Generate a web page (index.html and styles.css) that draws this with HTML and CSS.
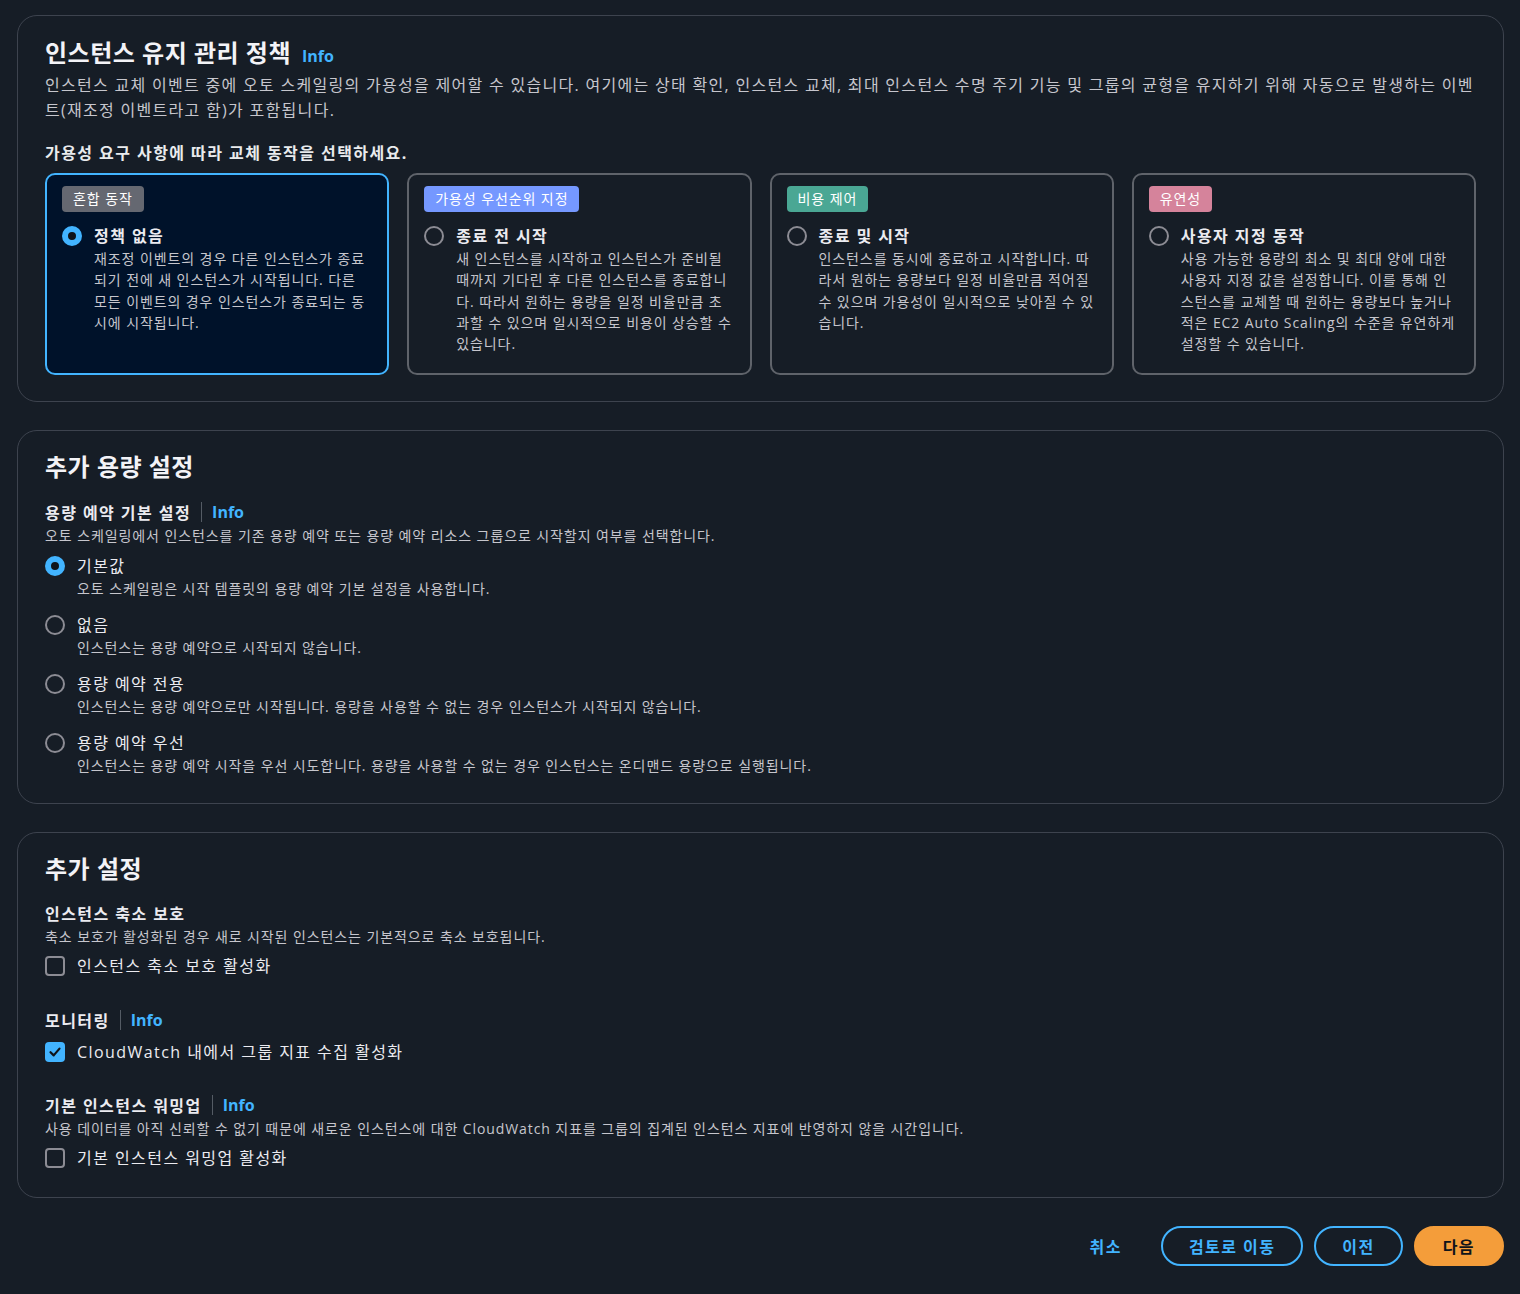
FILE: index.html
```html
<!DOCTYPE html>
<html lang="ko">
<head>
<meta charset="utf-8">
<title>인스턴스 유지 관리 정책</title>
<link rel="stylesheet" href="styles.css">
</head>
<body>
<div class="page">
  <section class="container">
    <div class="head-row">
      <h2 class="h2">인스턴스 유지 관리 정책</h2>
      <a class="info info-head">Info</a>
    </div>
    <p class="lead">인스턴스 교체 이벤트 중에 오토 스케일링의 가용성을 제어할 수 있습니다. 여기에는 상태 확인, 인스턴스 교체, 최대 인스턴스 수명 주기 기능 및 그룹의 균형을 유지하기 위해 자동으로 발생하는 이벤트(재조정 이벤트라고 함)가 포함됩니다.</p>
    <div class="field-label">가용성 요구 사항에 따라 교체 동작을 선택하세요.</div>
    <div class="tiles">
      <div class="tile selected">
        <span class="badge badge-gray">혼합 동작</span>
        <div class="tile-opt">
          <span class="radio checked"></span>
          <div class="tile-text">
            <div class="tile-label">정책 없음</div>
            <div class="tile-desc">재조정 이벤트의 경우 다른 인스턴스가 종료되기 전에 새 인스턴스가 시작됩니다. 다른 모든 이벤트의 경우 인스턴스가 종료되는 동시에 시작됩니다.</div>
          </div>
        </div>
      </div>
      <div class="tile">
        <span class="badge badge-blue">가용성 우선순위 지정</span>
        <div class="tile-opt">
          <span class="radio"></span>
          <div class="tile-text">
            <div class="tile-label">종료 전 시작</div>
            <div class="tile-desc">새 인스턴스를 시작하고 인스턴스가 준비될 때까지 기다린 후 다른 인스턴스를 종료합니다. 따라서 원하는 용량을 일정 비율만큼 초과할 수 있으며 일시적으로 비용이 상승할 수 있습니다.</div>
          </div>
        </div>
      </div>
      <div class="tile">
        <span class="badge badge-green">비용 제어</span>
        <div class="tile-opt">
          <span class="radio"></span>
          <div class="tile-text">
            <div class="tile-label">종료 및 시작</div>
            <div class="tile-desc">인스턴스를 동시에 종료하고 시작합니다. 따라서 원하는 용량보다 일정 비율만큼 적어질 수 있으며 가용성이 일시적으로 낮아질 수 있습니다.</div>
          </div>
        </div>
      </div>
      <div class="tile">
        <span class="badge badge-pink">유연성</span>
        <div class="tile-opt">
          <span class="radio"></span>
          <div class="tile-text">
            <div class="tile-label">사용자 지정 동작</div>
            <div class="tile-desc">사용 가능한 용량의 최소 및 최대 양에 대한 사용자 지정 값을 설정합니다. 이를 통해 인스턴스를 교체할 때 원하는 용량보다 높거나 적은 EC2 Auto Scaling의 수준을 유연하게 설정할 수 있습니다.</div>
          </div>
        </div>
      </div>
    </div>
  </section>

  <section class="container container-mid">
    <h2 class="h2 h2-block">추가 용량 설정</h2>
    <div class="sub-head">
      <span class="sub-title">용량 예약 기본 설정</span>
      <span class="sep"></span>
      <a class="info">Info</a>
    </div>
    <p class="desc">오토 스케일링에서 인스턴스를 기존 용량 예약 또는 용량 예약 리소스 그룹으로 시작할지 여부를 선택합니다.</p>
    <div class="radio-list">
      <div class="opt">
        <span class="radio checked"></span>
        <div>
          <div class="opt-label">기본값</div>
          <div class="desc">오토 스케일링은 시작 템플릿의 용량 예약 기본 설정을 사용합니다.</div>
        </div>
      </div>
      <div class="opt">
        <span class="radio"></span>
        <div>
          <div class="opt-label">없음</div>
          <div class="desc">인스턴스는 용량 예약으로 시작되지 않습니다.</div>
        </div>
      </div>
      <div class="opt">
        <span class="radio"></span>
        <div>
          <div class="opt-label">용량 예약 전용</div>
          <div class="desc">인스턴스는 용량 예약으로만 시작됩니다. 용량을 사용할 수 없는 경우 인스턴스가 시작되지 않습니다.</div>
        </div>
      </div>
      <div class="opt">
        <span class="radio"></span>
        <div>
          <div class="opt-label">용량 예약 우선</div>
          <div class="desc">인스턴스는 용량 예약 시작을 우선 시도합니다. 용량을 사용할 수 없는 경우 인스턴스는 온디맨드 용량으로 실행됩니다.</div>
        </div>
      </div>
    </div>
  </section>

  <section class="container container-last">
    <h2 class="h2 h2-block h2-tight">추가 설정</h2>
    <div class="group">
      <div class="sub-head"><span class="sub-title">인스턴스 축소 보호</span></div>
      <p class="desc">축소 보호가 활성화된 경우 새로 시작된 인스턴스는 기본적으로 축소 보호됩니다.</p>
      <label class="check-row"><span class="checkbox"></span><span class="opt-label">인스턴스 축소 보호 활성화</span></label>
    </div>
    <div class="group group-mon">
      <div class="sub-head">
        <span class="sub-title">모니터링</span>
        <span class="sep"></span>
        <a class="info">Info</a>
      </div>
      <label class="check-row check-gap"><span class="checkbox checked"><svg viewBox="0 0 20 20" width="20" height="20"><path d="M5.5 10.2 L8.7 13.4 L14.5 6.6" fill="none" stroke="#0f141a" stroke-width="2.2" stroke-linecap="round" stroke-linejoin="round"/></svg></span><span class="opt-label">CloudWatch 내에서 그룹 지표 수집 활성화</span></label>
    </div>
    <div class="group group-warm">
      <div class="sub-head">
        <span class="sub-title">기본 인스턴스 워밍업</span>
        <span class="sep"></span>
        <a class="info">Info</a>
      </div>
      <p class="desc">사용 데이터를 아직 신뢰할 수 없기 때문에 새로운 인스턴스에 대한 CloudWatch 지표를 그룹의 집계된 인스턴스 지표에 반영하지 않을 시간입니다.</p>
      <label class="check-row"><span class="checkbox"></span><span class="opt-label">기본 인스턴스 워밍업 활성화</span></label>
    </div>
  </section>

  <div class="actions">
    <button class="btn btn-link">취소</button>
    <button class="btn btn-normal">검토로 이동</button>
    <button class="btn btn-normal">이전</button>
    <button class="btn btn-primary">다음</button>
  </div>
</div>
</body>
</html>
```

FILE: styles.css
```css
* { box-sizing: border-box; }
html, body {
  margin: 0;
  background: #161d26;
}
body {
  font-family: "Open Sans", "Noto Sans CJK KR", sans-serif;
  color: #dedee3;
  font-size: 14px;
  letter-spacing: 0.065em;
}
.page {
  padding: 15px 16px 0 17px;
  display: flex;
  flex-direction: column;
  gap: 28px;
}
.container {
  border: 1px solid #3d434e;
  border-radius: 20px;
  padding: 20px 27px 26px 27px;
}
.container-mid { padding-top: 19px; }
.container-last { padding-top: 19px; padding-bottom: 27px; }
.head-row {
  display: flex;
  align-items: baseline;
  gap: 11px;
}
.h2 {
  margin: 0;
  font-size: 24px;
  line-height: 34px;
  font-weight: 700;
  color: #f3f3f7;
  letter-spacing: 0.5px;
}
.h2-block { margin-bottom: 16px; }
.h2-tight { margin-bottom: 15px; }
.info {
  color: #42b4ff;
  font-weight: 700;
  font-size: 16px;
  letter-spacing: 0;
}
.lead {
  margin: 3px 0 0 0;
  font-size: 16px;
  line-height: 25px;
  color: #c6c6cd;
  letter-spacing: 0.081em;
}
.field-label {
  margin-top: 18px;
  font-size: 16px;
  line-height: 24px;
  font-weight: 700;
  color: #e9ebed;
  letter-spacing: 0.09em;
}
.tiles {
  margin-top: 8px;
  display: grid;
  grid-template-columns: repeat(4, 1fr);
  gap: 18px;
}
.tile {
  border: 2px solid #5f636a;
  border-radius: 10px;
  padding: 11px 15px 18px 15px;
  background: #161d26;
}
.tile.selected {
  border-color: #42b4ff;
  background: #00122a;
}
.badge {
  display: inline-block;
  font-size: 14px;
  line-height: 26px;
  height: 26px;
  padding: 0 11px;
  border-radius: 4px;
  color: #ffffff;
}
.badge-gray { background: #656871; }
.badge-blue { background: #7598ff; }
.badge-green { background: #4aa794; }
.badge-pink { background: #d5839b; }
.tile-opt {
  margin-top: 12px;
  display: flex;
  gap: 12px;
}
.radio {
  flex: none;
  width: 20px;
  height: 20px;
  border-radius: 50%;
  border: 2px solid #8c8c94;
  margin-top: 2px;
}
.radio.checked {
  border: 6px solid #42b4ff;
  background: #0f141a;
}
.tile-text { flex: 1; min-width: 0; }
.tile-label {
  font-size: 16px;
  line-height: 24px;
  font-weight: 700;
  color: #ebebf0;
  letter-spacing: 0.09em;
}
.tile-desc {
  font-size: 14px;
  line-height: 21.33px;
  color: #c6c6cd;
}
.sub-head {
  display: flex;
  align-items: center;
  gap: 10px;
  height: 24px;
  margin-bottom: 1px;
}
.sub-title {
  font-size: 16px;
  font-weight: 700;
  color: #ebebf0;
  letter-spacing: 0.09em;
}
.sep {
  width: 1px;
  height: 20px;
  background: #545b64;
}
.desc {
  margin: 0;
  font-size: 14px;
  line-height: 22px;
  color: #c6c6cd;
}
.radio-list {
  margin-top: 7px;
  display: flex;
  flex-direction: column;
  gap: 13px;
}
.opt {
  display: flex;
  gap: 12px;
}
.opt .radio { margin-top: 2px; }
.opt-label {
  font-size: 16px;
  line-height: 24px;
  color: #ebebf0;
  letter-spacing: 0.09em;
}
.group-mon { margin-top: 30px; }
.group-warm { margin-top: 29px; }
.check-row {
  display: flex;
  align-items: center;
  gap: 12px;
  margin-top: 6px;
}
.check-gap { margin-top: 8px; }
.checkbox {
  flex: none;
  width: 20px;
  height: 20px;
  border: 2px solid #8c8c94;
  border-radius: 4px;
  display: flex;
  align-items: center;
  justify-content: center;
}
.checkbox.checked {
  border: none;
  background: #42b4ff;
}
.actions {
  display: flex;
  justify-content: flex-end;
  align-items: center;
  gap: 11px;
  padding-bottom: 20px;
}
.btn {
  font-family: inherit;
  font-size: 16px;
  font-weight: 700;
  letter-spacing: 0.09em;
  height: 40px;
  border-radius: 20px;
  padding: 0 26px;
  cursor: pointer;
}
.btn-link {
  background: none;
  border: 2px solid transparent;
  color: #42b4ff;
  padding: 0 16px;
  margin-right: 10px;
}
.btn-normal {
  background: transparent;
  border: 2px solid #42b4ff;
  color: #42b4ff;
}
.btn-primary {
  background: #f49d3a;
  border: 2px solid #f49d3a;
  color: #0f141a;
  padding: 0 27px;
}
```
